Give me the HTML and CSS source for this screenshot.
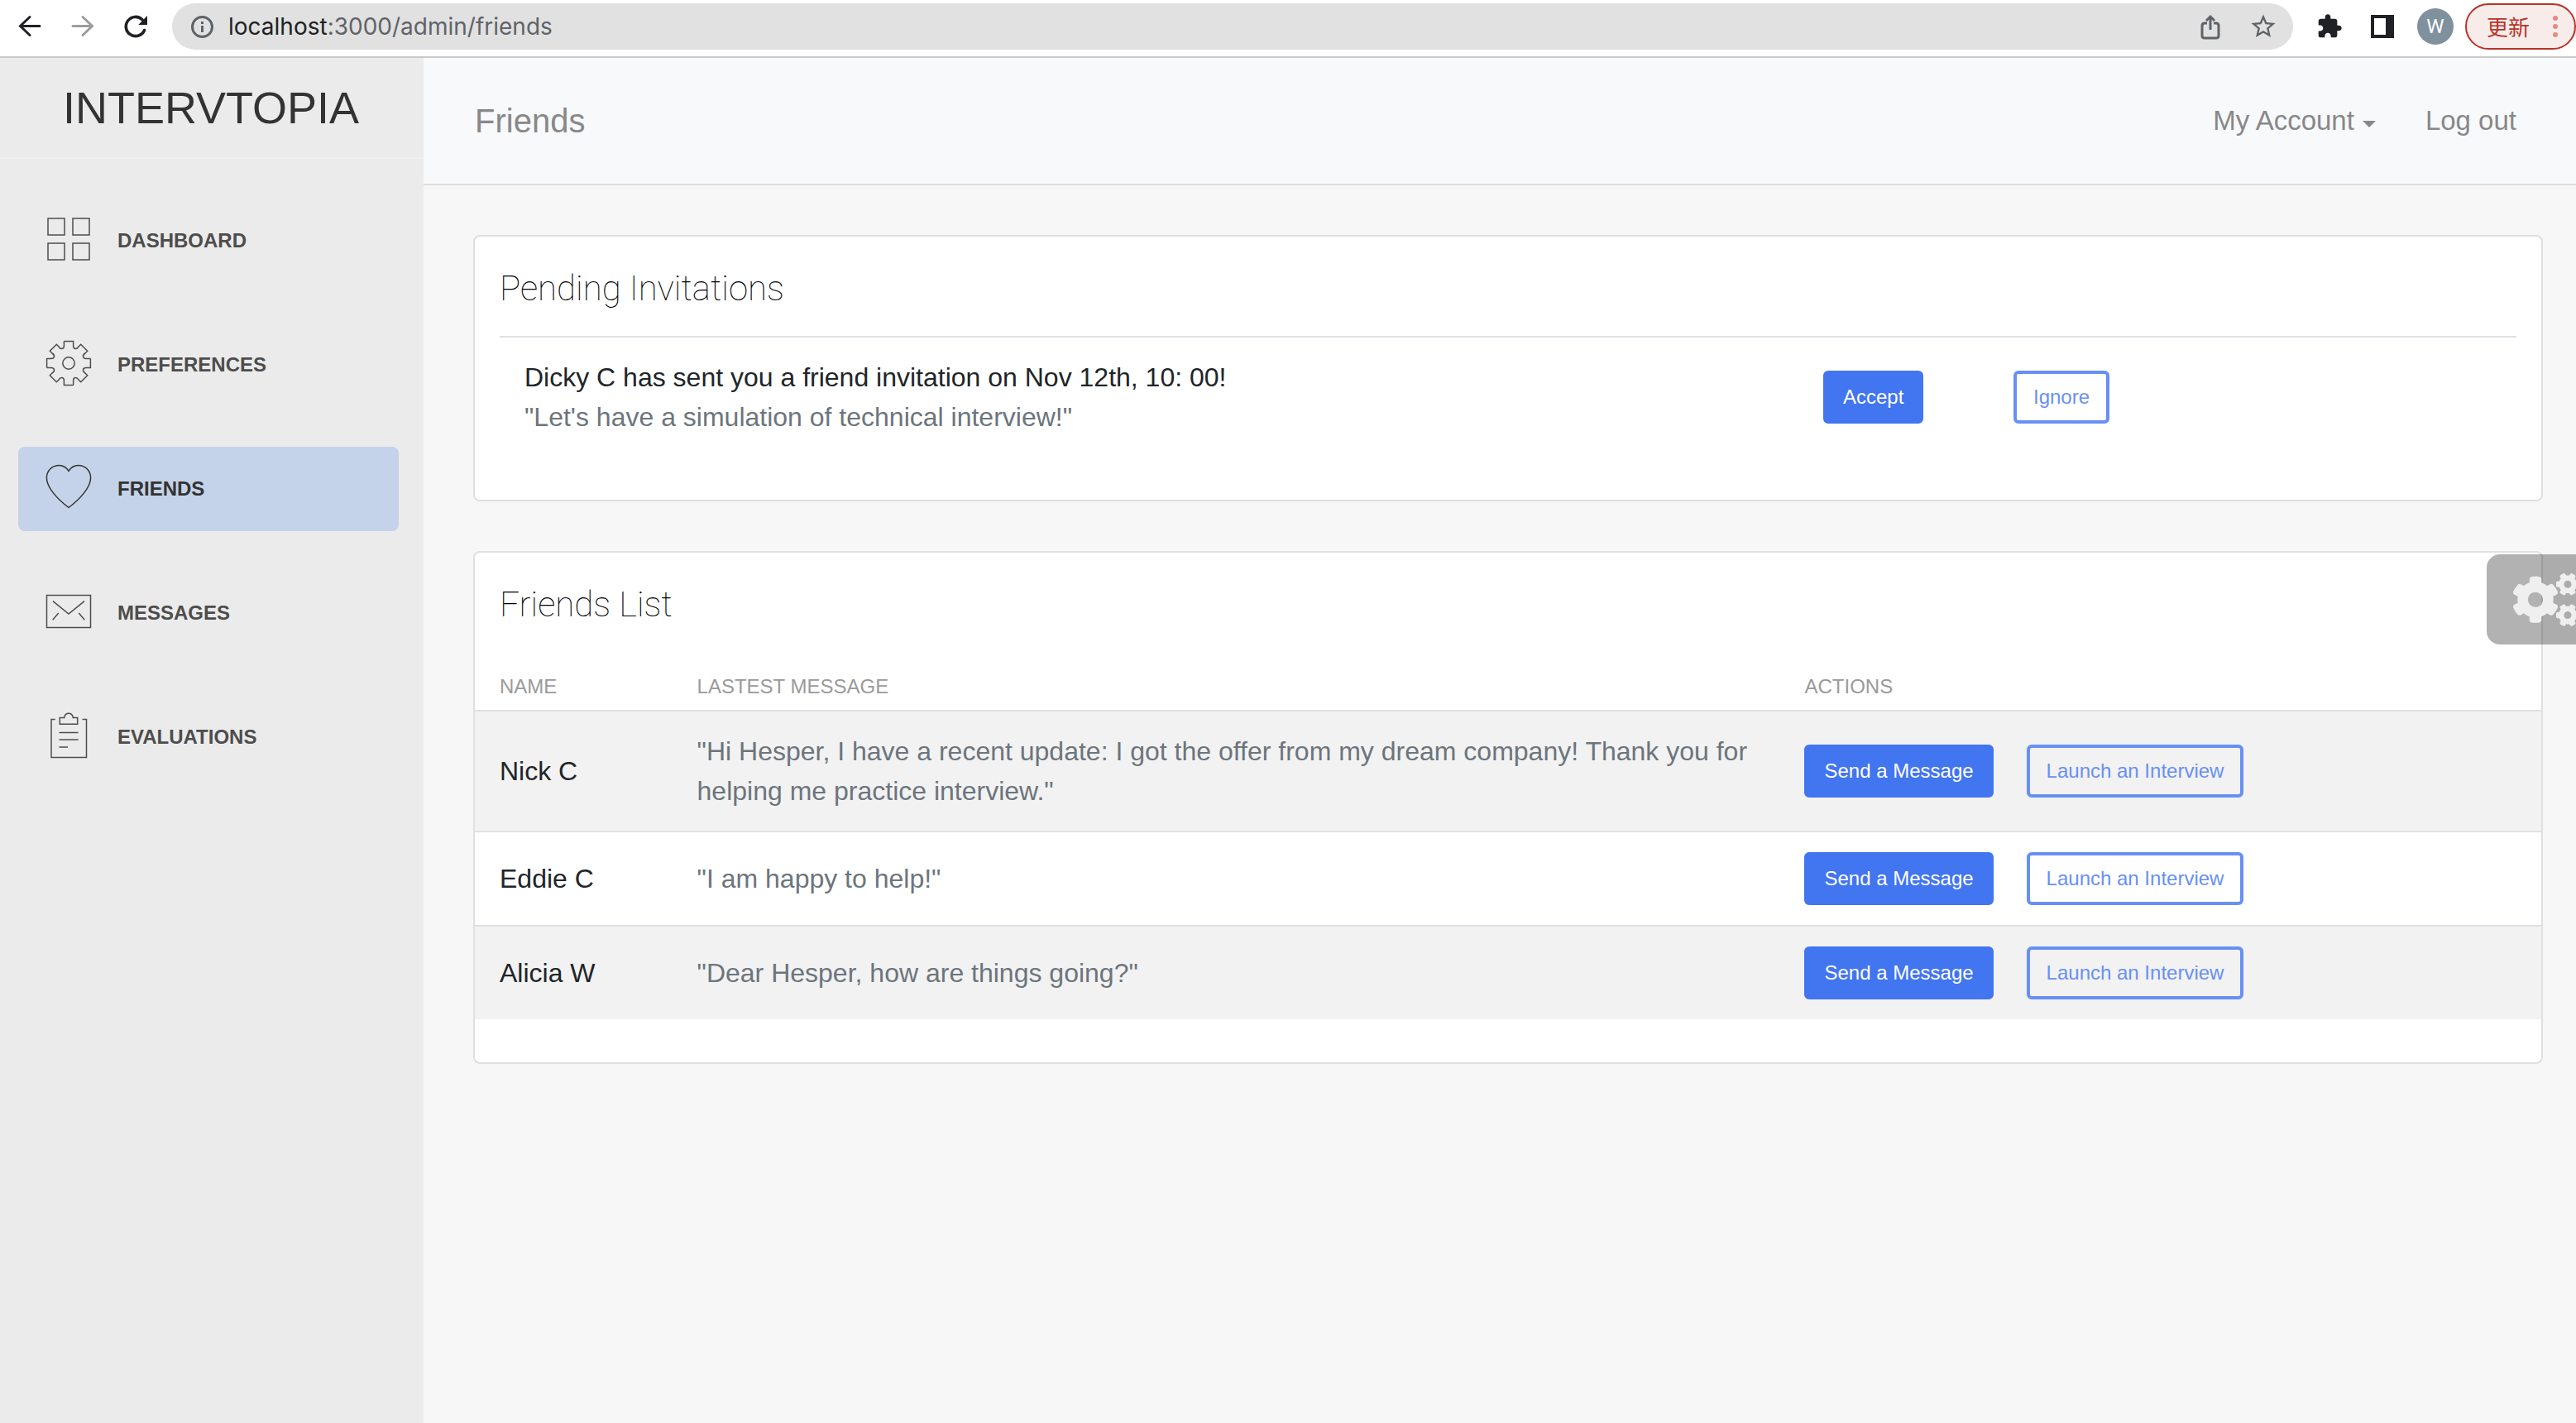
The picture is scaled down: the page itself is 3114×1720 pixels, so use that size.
FILE: index.html
```html
<!DOCTYPE html>
<html lang="en">
<head>
<meta charset="utf-8">
<title>Friends</title>
<link rel="stylesheet" href="styles.css">
</head>
<body>
<header class="toolbar">
  <div class="toolbar-nav">
    <button class="tool" type="button" aria-label="Back"><svg class="tool-icon" viewBox="0 0 32 32" fill="none" stroke="#202124" stroke-width="3" stroke-linecap="round"><path d="M28 15.5H5M16 4.5l-11.500 11 11.500 11"/></svg></button>
    <button class="tool" type="button" aria-label="Forward"><svg class="tool-icon" viewBox="0 0 32 32" fill="none" stroke="#9c9c9c" stroke-width="3" stroke-linecap="round"><path d="M4 15.500h23M16 4.500l11.500 11-11.500 11"/></svg></button>
    <button class="tool" type="button" aria-label="Reload"><svg class="tool-icon" viewBox="0 0 32 32"><path d="M26.600 20.500A11.600 11.600 0 1 1 24 7.700" fill="none" stroke="#202124" stroke-width="3.600" stroke-linecap="round"/><path d="M30 3v11H19.300z" fill="#202124"/></svg></button>
  </div>
  <div class="address">
    <svg class="tool-icon" viewBox="0 0 32 32"><circle cx="16.500" cy="16.500" r="12" fill="none" stroke="#5f6368" stroke-width="3"/><path d="M15 15h3v8h-3zM15 10h3v3h-3z" fill="#5f6368"/></svg>
    <span class="url">localhost<span class="url-path">:3000/admin/friends</span></span>
    <div class="address-actions">
      <button class="tool" type="button" aria-label="Share"><svg class="tool-icon" viewBox="0 0 32 32" fill="none" stroke="#5f6368" stroke-width="3"><path d="M12 12H9q-3 0-3 3v12q0 3 3 3h14q3 0 3-3V15q0-3-3-3h-3M16 20V5M11 9l5-5 5 5"/></svg></button>
      <button class="tool" type="button" aria-label="Bookmark"><svg class="tool-icon" viewBox="1 1 22 22"><path fill="#5f6368" d="M22 9.240l-7.190-.620L12 2 9.190 8.630 2 9.240l5.460 4.730L5.820 21 12 17.270 18.180 21l-1.630-7.030L22 9.240zM12 15.400l-3.760 2.270 1-4.280-3.320-2.880 4.380-.380L12 6.100l1.710 4.040 4.380.380-3.320 2.880 1 4.280L12 15.400z"/></svg></button>
    </div>
  </div>
  <div class="toolbar-tools">
    <div class="toolbar-nav">
      <button class="tool" type="button" aria-label="Extensions"><svg class="tool-icon" viewBox="0 0 24 24"><path fill="#202124" d="M20.500 11H19V7c0-1.100-.900-2-2-2h-4V3.500C13 2.120 11.880 1 10.500 1S8 2.120 8 3.500V5H4c-1.100 0-1.990.900-1.990 2v3.800H3.500c1.490 0 2.700 1.210 2.700 2.700s-1.210 2.700-2.700 2.700H2V20c0 1.100.900 2 2 2h3.800v-1.500c0-1.490 1.210-2.700 2.700-2.700s2.700 1.210 2.700 2.700V22H17c1.100 0 2-.900 2-2v-4h1.500c1.380 0 2.500-1.120 2.500-2.500S21.880 11 20.500 11z"/></svg></button>
      <button class="tool" type="button" aria-label="Side panel"><svg class="tool-icon" viewBox="0 0 32 32"><path fill="#202124" fill-rule="evenodd" d="M2 2h28v28H2zM6 6v20h14V6z"/></svg></button>
    </div>
    <div class="profile">
      <button class="avatar" type="button">W</button>
      <button class="update" type="button">更新 <svg class="dots" viewBox="0 0 6 26" fill="#e78a80"><circle cx="3" cy="3" r="3"/><circle cx="3" cy="13" r="3"/><circle cx="3" cy="23" r="3"/></svg></button>
    </div>
  </div>
</header>

<div class="app">
  <aside class="sidebar">
    <div class="brand">INTERVTOPIA</div>
    <nav class="menu">
      <a class="menu-item" href="#dashboard">
        <svg class="menu-icon" viewBox="0 0 62 62"><rect x="6" y="4" width="20" height="20"/><rect x="36" y="4" width="20" height="20"/><rect x="6" y="34" width="20" height="20"/><rect x="36" y="34" width="20" height="20"/></svg>
        Dashboard
      </a>
      <a class="menu-item" href="#preferences">
        <svg class="menu-icon" viewBox="0 0 62 62"><g transform="translate(31 29)"><path id="gear-quarter" d="M-5.600-26.400H5.600V-21C5.600-17 9.500-16 12-20L14.700-22.700 22.700-14.700 20-12C16-9.500 17-5.600 21-5.600H26.400"/><use href="#gear-quarter" transform="rotate(90)"/><use href="#gear-quarter" transform="rotate(180)"/><use href="#gear-quarter" transform="rotate(270)"/><circle r="7.200"/></g></svg>
        Preferences
      </a>
      <a class="menu-item active" href="#friends" aria-current="page">
        <svg class="menu-icon" viewBox="0 0 62 62"><path d="M31 9.300C28 4.500 24 2.400 19.500 2.400 11 2.400 4.400 9 4.400 17.500 4.400 29 17 43 31 53.500 45 43 57.600 29 57.600 17.500 57.600 9 51 2.400 42.500 2.400 38 2.400 34 4.500 31 9.300Z"/></svg>
        Friends
      </a>
      <a class="menu-item" href="#messages">
        <svg class="menu-icon" viewBox="0 0 62 62"><path d="M4.500 9.500h53v39h-53zM12 16.700 31 32 50 16.700M18.700 31l-7 8.300M43.300 31l7 8.300"/></svg>
        Messages
      </a>
      <a class="menu-item" href="#evaluations">
        <svg class="menu-icon" viewBox="0 0 62 62"><path d="M14.700 9.500H10v46h42.500v-46h-5M20.300 7.500h5.400c1-7 9.600-7 10.600 0h5.400v7.800H20.300zM19.500 25.500h23M19.500 34h23M19.500 43H30"/></svg>
        Evaluations
      </a>
    </nav>
  </aside>

  <div class="content">
    <nav class="navbar">
      <h1 class="page-title">Friends</h1>
      <div class="navbar-links">
        <a class="navbar-link" href="#account">My Account <span class="caret"></span></a>
        <a class="navbar-link" href="#logout">Log out</a>
      </div>
    </nav>

    <main class="cards">
      <section class="card">
        <h2 class="card-title">Pending Invitations</h2>
        <div class="invitation">
          <div class="invitation-cell">
            <p>Dicky C has sent you a friend invitation on Nov 12th, 10: 00!</p>
            <p class="muted-text">"Let's have a simulation of technical interview!"</p>
          </div>
          <div class="invitation-cell"><button class="btn btn-fill" type="button">Accept</button></div>
          <div class="invitation-cell"><button class="btn btn-outline" type="button">Ignore</button></div>
        </div>
      </section>

      <section class="card">
        <h2 class="card-title">Friends List</h2>
        <table class="friends">
          <thead>
            <tr><th class="col-name">Name</th><th class="col-message">Lastest Message</th><th>Actions</th></tr>
          </thead>
          <tbody>
            <tr>
              <td>Nick C</td>
              <td class="muted-text">"Hi Hesper, I have a recent update: I got the offer from my dream company! Thank you for helping me practice interview."</td>
              <td><div class="actions"><button class="btn btn-fill" type="button">Send a Message</button><button class="btn btn-outline" type="button">Launch an Interview</button></div></td>
            </tr>
            <tr>
              <td>Eddie C</td>
              <td class="muted-text">"I am happy to help!"</td>
              <td><div class="actions"><button class="btn btn-fill" type="button">Send a Message</button><button class="btn btn-outline" type="button">Launch an Interview</button></div></td>
            </tr>
            <tr>
              <td>Alicia W</td>
              <td class="muted-text">"Dear Hesper, how are things going?"</td>
              <td><div class="actions"><button class="btn btn-fill" type="button">Send a Message</button><button class="btn btn-outline" type="button">Launch an Interview</button></div></td>
            </tr>
          </tbody>
        </table>
      </section>
    </main>
  </div>
</div>

<button class="settings" type="button" aria-label="Settings">
  <svg class="settings-icon" viewBox="0 0 640 512" fill="#efefef"><path id="small-cog" d="M512.100 191l-8.200 14.300c-3 5.300-9.400 7.500-15.100 5.400-11.800-4.400-22.600-10.700-32.100-18.600-4.600-3.800-5.800-10.500-2.800-15.700l8.200-14.300c-6.900-8-12.300-17.300-15.900-27.400h-16.500c-6 0-11.200-4.300-12.200-10.300-2-12-2.100-24.600 0-37.100 1-6 6.200-10.400 12.200-10.400h16.500c3.600-10.100 9-19.400 15.900-27.400l-8.200-14.300c-3-5.200-1.900-11.900 2.800-15.700 9.500-7.900 20.400-14.200 32.100-18.600 5.700-2.100 12.100.100 15.100 5.400l8.200 14.300c10.500-1.900 21.200-1.900 31.700 0L552 6.300c3-5.300 9.400-7.500 15.100-5.400 11.800 4.400 22.600 10.700 32.100 18.600 4.600 3.800 5.800 10.500 2.800 15.700l-8.200 14.300c6.900 8 12.300 17.300 15.900 27.400h16.500c6 0 11.200 4.300 12.200 10.300 2 12 2.100 24.600 0 37.100-1 6-6.200 10.400-12.200 10.400h-16.500c-3.600 10.100-9 19.400-15.900 27.400l8.200 14.300c3 5.200 1.900 11.900-2.800 15.700-9.500 7.900-20.400 14.200-32.100 18.600-5.700 2.100-12.100-.100-15.100-5.400l-8.200-14.300c-10.400 1.900-21.200 1.900-31.700 0zm-10.500-58.800c38.500 29.600 82.400-14.300 52.800-52.800-38.500-29.700-82.400 14.300-52.800 52.800z"/><use href="#small-cog" y="299"/><path d="M386.300 286.100l33.700 16.800c10.100 5.800 14.500 18.100 10.500 29.100-8.900 24.200-26.400 46.400-42.600 65.800-7.400 8.900-20.200 11.100-30.300 5.300l-29.100-16.800c-16 13.700-34.600 24.600-54.900 31.700v33.600c0 11.600-8.300 21.600-19.700 23.600-24.600 4.200-50.400 4.400-75.900 0-11.500-2-20-11.900-20-23.600V418c-20.300-7.200-38.900-18-54.900-31.700L74 403c-10 5.800-22.900 3.600-30.300-5.300-16.200-19.400-33.300-41.600-42.200-65.700-4-10.900.400-23.200 10.500-29.100l33.300-16.800c-3.900-20.900-3.900-42.400 0-63.400L12 205.800c-10.100-5.800-14.600-18.100-10.500-29 8.900-24.200 26-46.400 42.200-65.800 7.400-8.900 20.200-11.100 30.300-5.300l29.100 16.800c16-13.700 34.600-24.600 54.900-31.700V57.100c0-11.500 8.200-21.500 19.600-23.500 24.600-4.200 50.500-4.400 76-.100 11.500 2 20 11.900 20 23.600v33.600c20.300 7.200 38.900 18 54.900 31.700l29.100-16.800c10-5.800 22.900-3.600 30.300 5.300 16.200 19.400 33.200 41.600 42.100 65.800 4 10.900.100 23.200-10 29.100l-33.700 16.800c3.900 21 3.900 42.500 0 63.500zm-117.600 21.100c59.200-77-28.700-164.900-105.700-105.700-59.200 77 28.700 164.900 105.700 105.700z"/></svg>
</button>
</body>
</html>
```
FILE: styles.css
```css
* {
  box-sizing: border-box;
}

body {
  margin: 0;
  min-height: 100vh;
  display: flex;
  flex-direction: column;
  background: #f7f7f7;
  color: #212529;
  font: 32px/48px "Liberation Sans", "Noto Sans CJK SC", sans-serif;
}

button {
  font: inherit;
  color: inherit;
  border: 0;
  padding: 0;
  background: none;
  cursor: pointer;
}

h1, h2, p {
  margin: 0;
}

svg {
  display: block;
  flex: none;
}

a {
  color: inherit;
  text-decoration: none;
}

/* Browser toolbar */
.toolbar {
  display: flex;
  align-items: center;
  gap: 28px;
  padding: 4px 0 8px 20px;
  background: #fff;
  border-bottom: 2px solid #c9c9c9;
}

.toolbar-nav,
.address-actions {
  display: flex;
  gap: 32px;
}

.toolbar-tools {
  display: flex;
  align-items: center;
  gap: 26px;
}

.tool-icon {
  width: 32px;
  height: 32px;
}

.address {
  flex: 1;
  display: flex;
  align-items: center;
  gap: 16px;
  height: 56px;
  padding: 0 20px;
  border-radius: 28px;
  background: #e1e1e1;
}

.url {
  flex: 1;
  color: #202124;
  font: 28px/32px Inter, sans-serif;
}

.url-path {
  color: #5f6368;
}

.profile {
  display: flex;
  align-items: center;
  gap: 14px;
}

.avatar {
  width: 44px;
  height: 44px;
  border-radius: 50%;
  background: #7e919d;
  color: #fff;
  font: 24px/44px Roboto, sans-serif;
}

.update {
  display: flex;
  align-items: center;
  justify-content: space-between;
  width: 134px;
  height: 56px;
  padding: 0 20px 0 24px;
  border: 2px solid #b93329;
  border-radius: 28px;
  background: #f8eceb;
  color: #b93329;
  font: 26px/32px "Noto Sans CJK SC", sans-serif;
}

.dots {
  width: 6px;
  height: 26px;
}

/* Layout */
.app {
  flex: 1;
  display: flex;
}

.sidebar {
  flex: none;
  width: 512px;
  background: #ebebeb;
  color: #4d4d4d;
}

.brand {
  padding: 28px 76px;
  border-bottom: 2px solid #efefef;
  color: #333;
  font-size: 54px;
  line-height: 64px;
}

.menu {
  display: flex;
  flex-direction: column;
  gap: 48px;
  padding: 48px 30px 48px 22px;
}

.menu-item {
  display: flex;
  align-items: center;
  gap: 28px;
  padding: 20px 30px;
  border-radius: 8px;
  font-size: 24px;
  font-weight: 700;
  text-transform: uppercase;
}

.menu-item.active {
  background: #c4d3e9;
  color: #333;
}

.menu-icon {
  width: 62px;
  height: 62px;
  fill: none;
  stroke: currentColor;
  stroke-width: 1.5;
}

.content {
  flex: 1;
  min-width: 0;
}

.navbar {
  display: flex;
  align-items: center;
  justify-content: space-between;
  padding: 48px 72px 48px 62px;
  border-bottom: 2px solid #dcdddf;
  background: #f8f9fb;
  color: #888;
}

.page-title {
  font-size: 40px;
  font-weight: 400;
  line-height: 56px;
}

.navbar-links {
  display: flex;
  gap: 60px;
  font-size: 33px;
}

.navbar-link {
  display: flex;
  align-items: center;
  gap: 10px;
}

.caret {
  margin-top: 8px;
  border: 8px solid transparent;
  border-top-color: currentColor;
  border-bottom: 0;
}

/* Cards */
.cards {
  display: flex;
  flex-direction: column;
  gap: 60px;
  padding: 60px 40px 60px 60px;
}

.card {
  padding: 37px 0 52px;
  border: 2px solid #dfdfdf;
  border-radius: 8px;
  background: #fff;
}

.card-title {
  padding: 0 30px;
  margin-bottom: 31px;
  color: #000;
  font: 100 42px/52px Roboto, sans-serif;
}

.invitation {
  display: grid;
  grid-template-columns: 1570fr 230fr 638fr;
  align-items: center;
  margin: 0 30px;
  padding: 24px 0;
  border-top: 2px solid #dee2e6;
}

.invitation-cell {
  padding: 0 30px;
}

.card > .invitation {
  padding-bottom: 24px;
}

.muted-text {
  color: #6c757d;
}

.btn {
  display: block;
  height: 64px;
  padding: 0 20px;
  border: 4px solid #4275f0;
  border-radius: 6px;
  font-size: 24px;
  line-height: 36px;
  white-space: nowrap;
}

.btn-fill {
  background: #4275f0;
  color: #fff;
}

.btn-outline {
  border-color: #6890f4;
  color: #6890f4;
}

.friends {
  width: 100%;
  border-collapse: separate;
  border-spacing: 0;
  table-layout: fixed;
}

.friends th {
  padding: 24px 30px 10px;
  color: #9a9a9a;
  font-size: 24px;
  font-weight: 400;
  line-height: 36px;
  text-align: left;
  text-transform: uppercase;
}

.friends td {
  padding: 24px 30px;
  border-top: 2px solid #dee2e6;
  vertical-align: middle;
}

.friends tbody tr:nth-child(odd) {
  background: #f2f2f2;
}

.friends .col-name {
  width: 9.55%;
}

.friends .col-message {
  width: 53.6%;
}

.actions {
  display: flex;
  gap: 40px;
}

/* Settings tab pinned over the page edge */
.settings {
  position: fixed;
  top: 670px;
  right: 0;
  width: 108px;
  padding: 23px 0 22px 32px;
  overflow: hidden;
  border-radius: 16px 0 0 16px;
  background: rgba(0, 0, 0, 0.3);
}

.settings-icon {
  width: 80px;
  height: 64px;
}
```
